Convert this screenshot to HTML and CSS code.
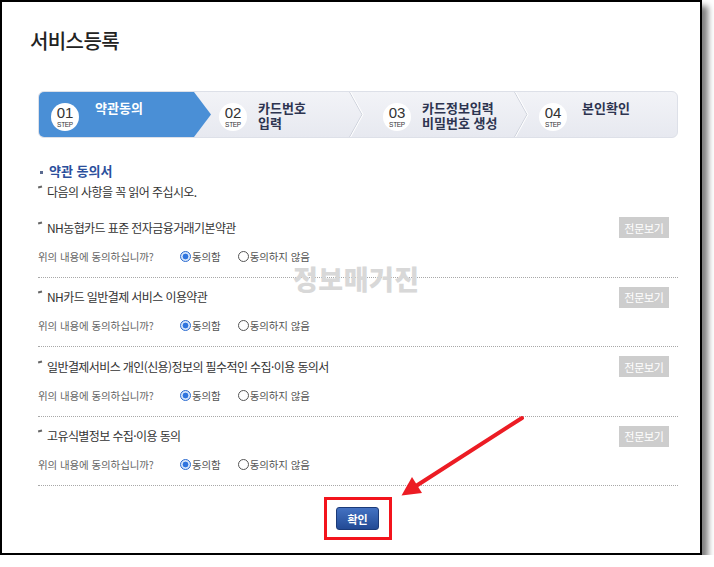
FILE: index.html
```html
<!DOCTYPE html>
<html lang="ko">
<head>
    <meta charset="UTF-8">
    <meta name="viewport" content="width=device-width, initial-scale=1.0">
    <title>서비스등록</title>
    <link rel="stylesheet" href="styles.css">
</head>
<body>
    <div class="frame">
        <h1 class="page-title">서비스등록</h1>
        <div class="content">
            <ol class="steps">
                <li class="step step-on">
                    <span class="step-num"><b>01</b><i>STEP</i></span>
                    <span class="step-label">약관동의</span>
                </li>
                <li class="step step-2">
                    <span class="step-num"><b>02</b><i>STEP</i></span>
                    <span class="step-label">카드번호<br>입력</span>
                    <svg class="chev" width="16" height="45" viewBox="0 0 16 45"><polyline points="1,-1 14,22.5 1,46" fill="none" stroke="#cdd1db" stroke-width="1"/><polyline points="2,-1 15,22.5 2,46" fill="none" stroke="#ffffff" stroke-width="1"/></svg>
                </li>
                <li class="step step-3">
                    <span class="step-num"><b>03</b><i>STEP</i></span>
                    <span class="step-label">카드정보입력<br>비밀번호 생성</span>
                    <svg class="chev" width="16" height="45" viewBox="0 0 16 45"><polyline points="1,-1 14,22.5 1,46" fill="none" stroke="#cdd1db" stroke-width="1"/><polyline points="2,-1 15,22.5 2,46" fill="none" stroke="#ffffff" stroke-width="1"/></svg>
                </li>
                <li class="step step-4">
                    <span class="step-num"><b>04</b><i>STEP</i></span>
                    <span class="step-label">본인확인</span>
                </li>
            </ol>

            <h2 class="sec-title">약관 동의서</h2>
            <p class="note intro">다음의 사항을 꼭 읽어 주십시오.</p>

            <div class="term">
                <div class="term-head">
                    <p class="note">NH농협카드 표준 전자금융거래기본약관</p>
                    <button class="btn-view" type="button">전문보기</button>
                </div>
                <div class="agree">
                    <span class="agree-q">위의 내용에 동의하십니까?</span>
                    <label class="radio on">동의함</label>
                    <label class="radio">동의하지 않음</label>
                </div>
            </div>
            <div class="term">
                <div class="term-head">
                    <p class="note">NH카드 일반결제 서비스 이용약관</p>
                    <button class="btn-view" type="button">전문보기</button>
                </div>
                <div class="agree">
                    <span class="agree-q">위의 내용에 동의하십니까?</span>
                    <label class="radio on">동의함</label>
                    <label class="radio">동의하지 않음</label>
                </div>
            </div>
            <div class="term">
                <div class="term-head">
                    <p class="note">일반결제서비스 개인(신용)정보의 필수적인 수집·이용 동의서</p>
                    <button class="btn-view" type="button">전문보기</button>
                </div>
                <div class="agree">
                    <span class="agree-q">위의 내용에 동의하십니까?</span>
                    <label class="radio on">동의함</label>
                    <label class="radio">동의하지 않음</label>
                </div>
            </div>
            <div class="term">
                <div class="term-head">
                    <p class="note">고유식별정보 수집·이용 동의</p>
                    <button class="btn-view" type="button">전문보기</button>
                </div>
                <div class="agree">
                    <span class="agree-q">위의 내용에 동의하십니까?</span>
                    <label class="radio on">동의함</label>
                    <label class="radio">동의하지 않음</label>
                </div>
            </div>

            <div class="actions">
                <span class="highlight"><button class="btn-ok" type="button">확인</button></span>
            </div>
        </div>

        <div class="watermark">정보매거진</div>

        <svg class="arrow" width="140" height="92" viewBox="0 0 140 92">
            <line x1="132" y1="8" x2="26" y2="76" stroke="#ec1c24" stroke-width="4" stroke-linecap="round"/>
            <polygon points="11.5,85.5 32,83 22,67" fill="#ec1c24"/>
        </svg>
    </div>
</body>
</html>
```

FILE: styles.css
```css
body {
    margin: 0;
    background-color: #fff;
    font-family: "Noto Sans CJK KR", "Noto Sans", sans-serif;
    color: #333;
}
.frame {
    position: relative;
    width: 698px;
    height: 551px;
    border: 2px solid #000;
    box-shadow: 6px 6px 6px rgba(0, 0, 0, 0.5);
    background-color: #fff;
}
.page-title {
    margin: 0;
    padding: 27px 0 0 28px;
    font-size: 20px;
    line-height: 24px;
    font-weight: 500;
    letter-spacing: -0.6px;
    color: #222;
}
.content {
    width: 640px;
    margin-left: 36px;
}

/* steps */
.steps {
    display: grid;
    grid-template-columns: 172px 153px 165px 148px;
    height: 45px;
    margin: 38px 0 0;
    padding: 0;
    list-style: none;
    border: 1px solid #dde0e8;
    border-radius: 6px;
    overflow: hidden;
    background: linear-gradient(#f2f3f7, #e7e9f0);
}
.step {
    display: flex;
    align-items: center;
    padding-left: 12px;
}
.step-on {
    background-color: #4a8fd6;
    clip-path: polygon(0 0, 155px 0, 172px 50%, 155px 100%, 0 100%);
}
.step-2 { padding-left: 8px; }
.step-3 { padding-left: 19px; }
.step-4 { padding-left: 10px; }
.step-num {
    display: flex;
    flex-direction: column;
    align-items: center;
    width: 28px;
    height: 27px;
    margin-top: 4px;
    padding-top: 1px;
    border-radius: 50%;
    background-color: #fff;
    color: #333;
    flex-shrink: 0;
}
.step-num b {
    font-family: "Liberation Sans", sans-serif;
    font-weight: 400;
    font-size: 15px;
    line-height: 17px;
}
.step-num i {
    font-family: "Liberation Sans", sans-serif;
    font-style: normal;
    font-size: 6.5px;
    line-height: 7px;
    letter-spacing: -0.3px;
}
.step-label {
    align-self: flex-start;
    margin: 8px 0 0 11px;
    font-size: 13px;
    line-height: 15px;
    font-weight: 700;
    color: #2d3450;
    white-space: nowrap;
}
.step-on .step-label {
    margin-left: 16px;
    color: #fff;
}
.step-4 .step-label { margin-left: 15px; }
.chev {
    margin-left: auto;
    flex-shrink: 0;
}

/* terms */
.sec-title {
    margin: 24px 0 0;
    font-size: 13px;
    line-height: 18px;
    font-weight: 700;
    color: #2b4f9c;
}
.sec-title::before {
    content: "";
    display: inline-block;
    width: 3px;
    height: 3px;
    margin: 0 6px 0 2px;
    vertical-align: middle;
    background-color: #5a6a90;
}
.note {
    margin: 0;
    font-size: 12px;
    line-height: 16px;
    letter-spacing: -0.6px;
    color: #333;
}
.note::before {
    content: "";
    display: inline-block;
    width: 4px;
    height: 1.5px;
    margin: 2px 5px 0 0;
    vertical-align: top;
    background-color: #666;
    transform: rotate(-15deg);
}
.intro {
    margin: 4px 0 8px;
}
.term {
    padding: 9px 0 12.5px;
    border-bottom: 1px dotted #a8a8a8;
}
.term-head {
    display: flex;
    align-items: center;
    justify-content: space-between;
    height: 21px;
    padding-right: 9px;
}
.btn-view {
    width: 50px;
    height: 21px;
    padding: 0;
    border: none;
    background-color: #cdcdcd;
    color: #fff;
    font-family: inherit;
    font-size: 11px;
    letter-spacing: -0.3px;
}
.agree {
    display: flex;
    align-items: center;
    height: 16px;
    margin-top: 10px;
    font-size: 10.5px;
    letter-spacing: -0.1px;
    color: #666;
}
.agree-q {
    width: 142px;
}
.radio {
    display: flex;
    align-items: center;
    margin-right: 17px;
    color: #555;
}
.radio::before {
    content: "";
    width: 9px;
    height: 9px;
    margin-right: 1px;
    border: 1px solid #555;
    border-radius: 50%;
    background-color: #fff;
}
.radio.on::before {
    border-color: #2a6ad0;
    background: radial-gradient(circle, #2f74de 0, #2f74de 2.6px, #d6e6fb 3.2px);
}

/* confirm */
.actions {
    display: flex;
    justify-content: center;
    margin-top: 11px;
}
.highlight {
    display: inline-block;
    padding: 7px 10px 7px 9px;
    border: 3px solid #f3141c;
}
.btn-ok {
    display: block;
    width: 43px;
    height: 23px;
    padding: 0;
    border: 1px solid #1b3a78;
    border-radius: 3px;
    background: linear-gradient(#4472c2, #224a95);
    color: #fff;
    font-family: inherit;
    font-size: 11px;
    font-weight: 700;
}

/* overlays */
.watermark {
    position: absolute;
    left: 291px;
    top: 263px;
    font-size: 27px;
    line-height: 28px;
    font-weight: 900;
    letter-spacing: 0.5px;
    color: #d8d8d8;
}
.arrow {
    position: absolute;
    left: 388px;
    top: 408px;
}
```
